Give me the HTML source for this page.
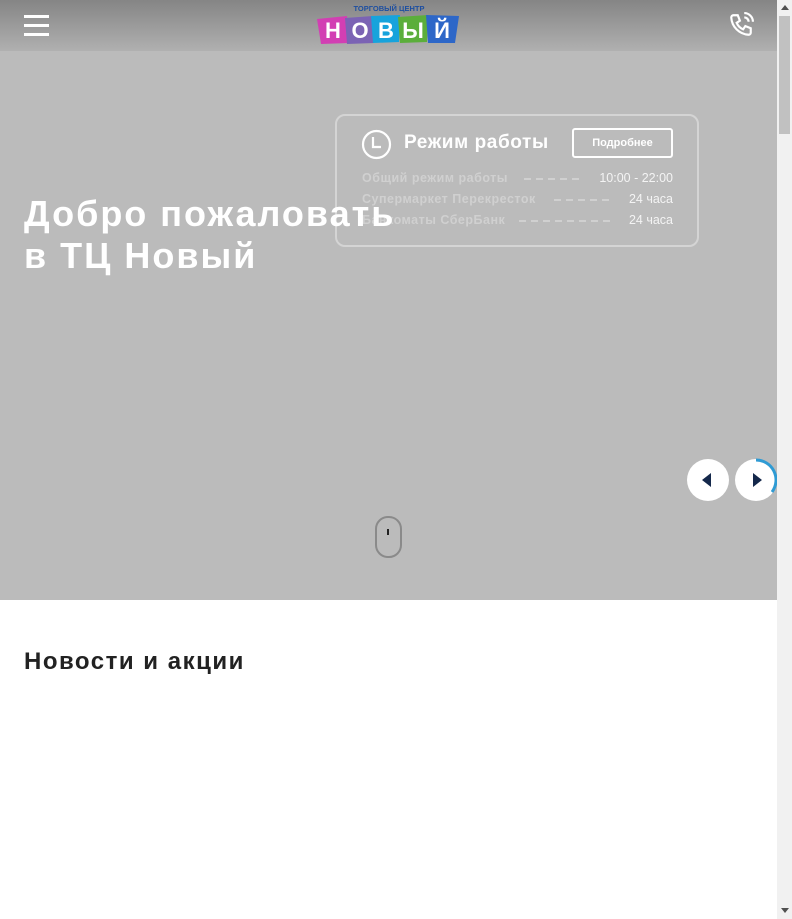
<!DOCTYPE html>
<html><head><meta charset="utf-8"><style>
*{margin:0;padding:0;box-sizing:border-box}
body{width:792px;height:919px;overflow:hidden;background:#fff;font-family:"Liberation Sans",sans-serif;position:relative}
.hero{position:absolute;left:0;top:0;width:777px;height:600px;background:#bbbbbb}
.hdr{position:absolute;left:0;top:0;width:777px;height:51px;background:linear-gradient(#858585,#b0b0b0)}
.burger span{position:absolute;left:24px;width:25px;height:3px;background:#fff}
h1{position:absolute;left:24px;top:193px;color:#fff;font-size:36px;line-height:42px;font-weight:bold;letter-spacing:2px}
.card{position:absolute;left:335px;top:114px;width:364px;height:133px;border:2px solid #d4d4d4;border-radius:10px}
.row{position:absolute;left:25px;width:311px;font-size:12.5px;color:#d0d0d0;font-weight:bold;letter-spacing:0.5px}
.row b{position:absolute;right:0;top:0;color:#f4f4f4;font-weight:normal;letter-spacing:0}
.row i{position:absolute;top:7px;height:2px;background:repeating-linear-gradient(90deg,#d0d0d0 0 7px,transparent 7px 12px)}
.btn{position:absolute;left:235px;top:12px;width:101px;height:30px;border:2px solid #fff;border-radius:3px;color:#fff;font-size:11px;font-weight:bold;text-align:center;line-height:26px}
.circ{position:absolute;top:459px;width:42px;height:42px;border-radius:50%;background:#fff}
.sb{position:absolute;left:777px;top:0;width:15px;height:919px;background:#f1f1f1}
</style></head><body>
<div class="hero">
<div class="hdr">
<div class="burger"><span style="top:15px"></span><span style="top:24px"></span><span style="top:33px"></span></div>
<svg style="position:absolute;left:315px;top:3px" width="148" height="42" viewBox="0 0 148 42">
<text x="74" y="8" text-anchor="middle" font-size="7.5" font-weight="bold" fill="#1e4fa0" font-family="Liberation Sans">ТОРГОВЫЙ ЦЕНТР</text>
<polygon points="2,16 32,13 34,40 6,41" fill="#d23fb3"/>
<polygon points="30,15 58,13 59,40 32,41" fill="#7b63b4"/>
<polygon points="56,13 85,12 84,39 58,40" fill="#17a3dc"/>
<polygon points="83,14 113,12 112,39 85,40" fill="#5bae3b"/>
<polygon points="111,12 144,13 140,40 113,40" fill="#2d67c8"/>
<g font-size="22" font-weight="bold" fill="#fff" font-family="Liberation Sans" text-anchor="middle">
<text x="18" y="35">Н</text><text x="45" y="35">О</text><text x="71" y="35">В</text><text x="98" y="35">Ы</text><text x="127" y="35">Й</text></g>
</svg>
<svg style="position:absolute;left:728px;top:12px" width="26" height="26" viewBox="0 0 24 24" fill="none" stroke="#fff" stroke-width="2"><path d="M5 3h4l2 5-3 2a11 11 0 0 0 6 6l2-3 5 2v4a2 2 0 0 1-2 2A17 17 0 0 1 3 5a2 2 0 0 1 2-2z"/><path d="M15 5a4 4 0 0 1 4 4M15 1a8 8 0 0 1 8 8"/></svg>
</div>
<div class="card">
<svg style="position:absolute;left:24px;top:13px" width="31" height="31" viewBox="0 0 31 31" fill="none" stroke="#fff" stroke-width="2.2"><circle cx="15.5" cy="15.5" r="13.5"/><path d="M12 8v10h8"/></svg>
<div style="position:absolute;left:67px;top:16px;color:#fff;font-size:19px;font-weight:bold;letter-spacing:0.6px">Режим работы</div>
<div class="btn">Подробнее</div>
<div class="row" style="top:55px">Общий режим работы<i style="left:162px;width:60px"></i><b>10:00 - 22:00</b></div>
<div class="row" style="top:76px">Супермаркет Перекресток<i style="left:192px;width:60px"></i><b>24 часа</b></div>
<div class="row" style="top:97px">Банкоматы СберБанк<i style="left:157px;width:95px"></i><b>24 часа</b></div>
</div>
<h1>Добро пожаловать<br>в ТЦ Новый</h1>
<div class="circ" style="left:687px"><div style="position:absolute;left:15px;top:14px;border-right:9px solid #14284b;border-top:7px solid transparent;border-bottom:7px solid transparent"></div></div>
<div class="circ" style="left:735px"><div style="position:absolute;left:18px;top:14px;border-left:9px solid #14284b;border-top:7px solid transparent;border-bottom:7px solid transparent"></div>
<svg style="position:absolute;left:-1px;top:-1px" width="44" height="44"><path d="M22 2A20 20 0 0 1 38 34" fill="none" stroke="#2f9bd4" stroke-width="3"/></svg></div>
<div style="position:absolute;left:375px;top:516px;width:27px;height:42px;border:2px solid #8a8a8a;border-radius:13px"><div style="position:absolute;left:10px;top:11px;width:2px;height:6px;background:#222"></div></div>
</div>
<div style="position:absolute;left:24px;top:648px;font-size:24px;font-weight:bold;color:#222;letter-spacing:1.5px">Новости и акции</div>
<div class="sb"><div style="position:absolute;left:2px;top:16px;width:11px;height:118px;background:#c1c1c1"></div>
<div style="position:absolute;left:4px;top:5px;border-bottom:5px solid #505050;border-left:4px solid transparent;border-right:4px solid transparent"></div>
<div style="position:absolute;left:4px;top:908px;border-top:5px solid #505050;border-left:4px solid transparent;border-right:4px solid transparent"></div></div>
</body></html>
